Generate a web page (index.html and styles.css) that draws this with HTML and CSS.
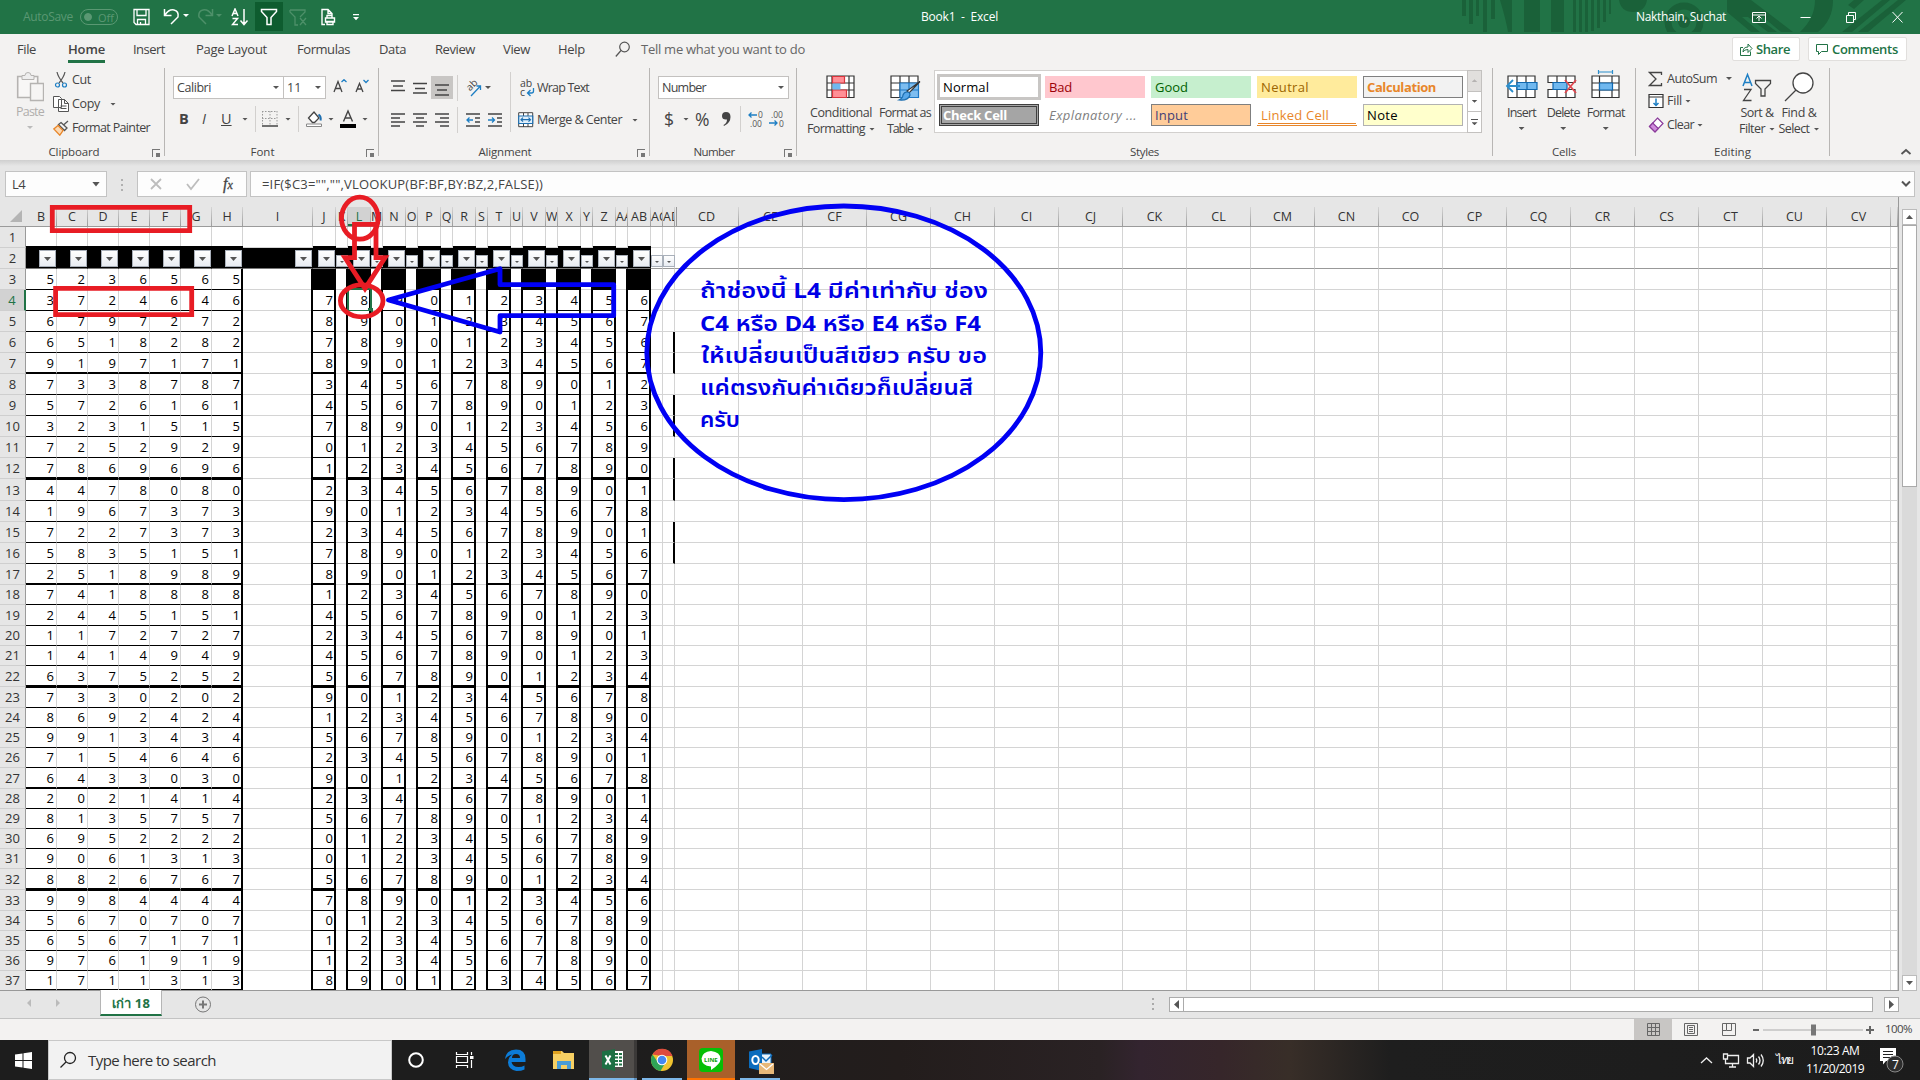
FILE: index.html
```html
<!DOCTYPE html>
<html lang="en">
<head>
<meta charset="utf-8">
<title>Book1 - Excel</title>
<link rel="stylesheet" href="styles.css">
</head>
<body>
<div class="screen">
<header class="titlebar">
  <svg class="titleart" width="500" height="32" viewBox="1420 0 500 32" fill="#1a6139">
    <path d="M1462 0h4v16h-4zM1469 0h4v24h-4zM1476 0h3v16h-3zM1483 0h4v32h-4zM1491 0h4v19h-4zM1500 0h12v32h-4q-2-12-8-32zM1524 0h16v32h-16zM1551 0h13v32h-13zM1573 0h3v32h-3zM1579 0h3v32h-3zM1585 0h3v32h-3zM1591 0h3v31h-3zM1597 0h3v28h-3zM1603 0h3v22h-3zM1609 0h2v14h-2zM1619 0h28q-2 12-14 12t-14-12z"/>
    <path d="M1727 0h24l42 32h-12l-18-15h-6l20 15h-9l-20-15h-6l18 15h-9l-24-20zM1815 0h18q0 20-15 32h-18q15-14 15-32zM1854 0h10l-10 9-6-4zM1842 32l40-32h8l-38 32zM1858 32l40-32h8l-38 32z"/>
    <circle cx="1684" cy="22" r="16" fill="none" stroke="#1a6139" stroke-width="7"/><circle cx="1684" cy="22" r="6"/>
  </svg>
  <div class="quick">
    <span class="faded" data-w="50">AutoSave</span>
    <svg width="40" height="18" fill="none" stroke="#5a9873"><rect x=".5" y="1.5" width="37" height="15" rx="7.5"/><circle cx="8" cy="9" r="3.5" fill="#5a9873"/><text x="18" y="13.5" font-size="11" fill="#5a9873" stroke="none">Off</text></svg>
    <svg width="18" height="18" fill="none" stroke="#fff" stroke-width="1.3"><path d="M1 1.500h15v15H3l-2-2zM4 1.500v6h9v-6M4.500 16.500v-5h8v5M7.500 16v-2"/></svg>
    <svg width="28" height="18" fill="none" stroke="#fff" stroke-width="1.5"><path d="M1.500 1v6.500h7M2 7q4-6 9-5t4 7l-7 7"/><path d="M20 6h6l-3 3z" fill="#fff" stroke="none"/></svg>
    <svg width="28" height="18" fill="none" stroke="#4d9069" stroke-width="1.500"><path d="M14.500 1v6.500h-7M14 7q-4-6-9-5t-4 7l7 7"/><path d="M18 6h6l-3 3z" fill="#4d9069" stroke="none"/></svg>
    <svg width="18" height="18" fill="none" stroke="#fff" stroke-width="1.500"><path d="M1 8l3-7 3 7M2 5.500h4M1.500 10.500h5l-5 6h5.500M13 1v15M9.500 12.500l3.500 4 3.500-4"/></svg>
    <span class="filteron"><svg width="18" height="18" fill="none" stroke="#fff" stroke-width="1.500"><path d="M1.500 1.500h15v2l-5.500 6v7h-4v-7l-5.500-6z"/></svg></span>
    <svg width="20" height="18" fill="none" stroke="#4d9069" stroke-width="1.300"><path d="M1 2h15v2l-5 5M1 2v2l5 5v8h3M11 10l6 7M17 10l-6 7"/></svg>
    <svg width="16" height="18" fill="none" stroke="#fff" stroke-width="1.400"><path d="M4 16.500H1v-15h6l4 4v3M7 1.500v4h4M6 9.500v-2h5v2M4.500 10h9v4h-9zM6 13.500h6v3H6z"/></svg>
    <svg width="8" height="18" fill="#fff"><path d="M0 6h6v1.200H0zM0 9h6l-3 3.200z"/></svg>
  </div>
  <span class="book" data-w="77">Book1&nbsp; -&nbsp; Excel</span>
  <span class="user" data-w="90">Nakthain, Suchat</span>
  <svg class="winicons" width="152" height="16" fill="none" stroke="#fff"><path d="M.500 3.500h13v10H.500zM.500 6h13M7 12V7.500M4.500 9.500L7 7l2.500 2.500M48.500 8.500h10M94.500 6.500h7v7h-7zM96.500 6v-2.500h7v7h-2.500M140.500 3l10 10.500M150.500 3l-10 10.500"/></svg>
</header>

<nav class="tabs">
  <span class="tab" data-w="19">File</span><span class="tab home" data-w="37">Home</span><span class="tab" data-w="32">Insert</span><span class="tab" data-w="71">Page Layout</span><span class="tab" data-w="53">Formulas</span><span class="tab" data-w="27">Data</span><span class="tab" data-w="40">Review</span><span class="tab" data-w="27">View</span><span class="tab" data-w="27">Help</span>
  <svg width="16" height="18" fill="none" stroke="#555" stroke-width="1.200"><circle cx="9.500" cy="6" r="4.800"/><path d="M6 9.500L.800 15.500"/></svg>
  <span class="tab tell" data-w="164">Tell me what you want to do</span>
  <span class="pill share"><svg width="13" height="14" fill="none" stroke="#217346"><path d="M3 5.500H.500v8h10v-4M3 10q0-5 5-5V2l4 4.500-4 4V7.500q-4 0-5 2.500z"/></svg><b data-w="34">Share</b></span>
  <span class="pill comments"><svg width="13" height="14" fill="none" stroke="#217346"><path d="M.500 2.500h11v7h-6l-3 3v-3h-2z"/></svg><b data-w="66">Comments</b></span>
</nav>

<section class="ribbon">
  <div class="group g-clip">
    <div class="body">
      <div class="big paste">
        <svg width="28" height="32" fill="none" stroke="#b5b3b1"><path d="M1.700 5.500h20v21h-20z" stroke-width="1.600" fill="#f8f7f6"/><path d="M6 8.500v-4h3q0-3 3-3t3 3h3v4z" fill="#eee"/><path d="M14.500 12.500h13v17h-13z" stroke-width="1.400" fill="#f6f5f4"/></svg>
        <span class="dim" data-w="28">Paste</span><i class="caret light"></i>
      </div>
      <div class="cliplist">
        <div><svg width="16" height="16" fill="none" stroke="#555" stroke-width="1.200"><path d="M4 0q1 5 6 11M12 0q-1 5-6 11"/><circle cx="4.500" cy="13" r="2" stroke="#1e7fc4"/><circle cx="11.500" cy="13" r="2" stroke="#1e7fc4"/></svg><span data-w="19">Cut</span></div>
        <div><svg width="16" height="16" fill="#fff" stroke="#555"><path d="M.500 .500h6l2 2v9h-8zM5.500 3.500h6l4 4v8h-10zM11.500 3.500v4h4M7.500 10h6M7.500 12.500h6"/></svg><span data-w="28">Copy</span><i class="caret gap"></i></div>
        <div><svg width="16" height="16" fill="none" stroke="#555" stroke-width="1.300"><path d="M15 1l-4.500 4M8 2.500l6 5.500-2.500 2.500-6-6z"/><path d="M5 5.500L.800 9l6 6.200 3.200-4.700z" stroke="#e8862a" fill="#fbd9b4"/></svg><span data-w="78">Format Painter</span></div>
      </div>
    </div>
    <div class="label"><span data-w="51">Clipboard</span><i class="launch"></i></div>
  </div>

  <div class="group g-font">
    <div class="r1 fontrow1"><span class="combo"><span data-w="34">Calibri</span><i class="caret"></i></span><span class="combo size"><span>11</span><i class="caret"></i></span>
      <svg width="15" height="18" fill="none" stroke="#444" stroke-width="1.300"><path d="M1 13L5 2.500 9 13M2.500 9.500h5"/><path d="M8.500 3L11 .700 13.500 3" stroke="#1e7fc4"/></svg>
      <svg width="15" height="18" fill="none" stroke="#444" stroke-width="1.300"><path d="M1 13L4.500 4.500 8 13M2.500 10h4"/><path d="M8.500 1l2.500 2.500L13.500 1" stroke="#1e7fc4"/></svg></div>
    <div class="r2 fontrow2"><b>B</b><em>I</em><u>U</u><i class="caret"></i><i class="vr"></i>
      <svg width="16" height="16" fill="none" stroke="#999" stroke-dasharray="1.500 1.500"><path d="M.500 0v14M15 0v14M0 .500h15M8 0v14M0 7.500h15"/><path d="M0 15h16" stroke="#444" stroke-width="1.500" stroke-dasharray="none"/></svg><i class="caret"></i><i class="vr"></i>
      <svg width="17" height="18" fill="none" stroke="#444" stroke-width="1.300"><path d="M2.500 8l5.500-6 5 6-4.500 4.500h-2z" fill="#fff"/><path d="M12.500 4.500q3 2 2 6" stroke="#1e6fb0" stroke-width="2"/><path d="M.500 14h15v2.500H.500z" fill="#fff" stroke="#888" stroke-width="1"/></svg><i class="caret"></i>
      <svg width="16" height="20" fill="none" stroke="#444" stroke-width="1.400"><path d="M3.500 12.500L8 2l4.500 10.500M5 9h6"/><path d="M0 15h16v4H0z" fill="#000" stroke="none"/></svg><i class="caret"></i></div>
    <div class="label"><span data-w="24">Font</span><i class="launch"></i></div>
  </div>

  <div class="group g-align">
    <div class="r1 alignrow">
      <svg width="15" height="16" stroke="#444" stroke-width="1.300"><path d="M0 1h14M2 6h10M0 10.500h14"/></svg>
      <svg width="15" height="16" stroke="#444" stroke-width="1.300"><path d="M0 3.500h14M2 8.500h10M0 13h14"/></svg>
      <span class="pressed"><svg width="15" height="16" stroke="#444" stroke-width="1.300"><path d="M0 5h14M2 10h10M0 15h14"/></svg></span>
      <i class="vr"></i>
      <svg width="17" height="18" fill="none"><text x="0" y="0" font-size="10" fill="#444" transform="translate(5 12.500) rotate(-45)">ab</text><path d="M6 17L15 7.500M11.500 7h4v4" stroke="#1e7fc4" stroke-width="1.300"/></svg>
      <i class="caret"></i><i class="vr tall"></i>
      <svg width="16" height="22" fill="none"><text x="0" y="10" font-size="10.500" fill="#444">ab</text><text x="0" y="19" font-size="10.500" fill="#444">c</text><path d="M13.500 11v3q0 2-2 2H8M10.500 13l-3 3 3 3" stroke="#1e7fc4" stroke-width="1.300"/></svg>
      <span data-w="52">Wrap Text</span></div>
    <div class="r2 alignrow two">
      <svg width="15" height="16" stroke="#444" stroke-width="1.300"><path d="M0 2h14M0 6h9M0 10h14M0 14h9"/></svg>
      <svg width="15" height="16" stroke="#444" stroke-width="1.300"><path d="M0 2h14M3 6h8M0 10h14M3 14h8"/></svg>
      <svg width="15" height="16" stroke="#444" stroke-width="1.300"><path d="M0 2h14M5 6h9M0 10h14M5 14h9"/></svg>
      <i class="vr"></i>
      <svg width="15" height="16" fill="none" stroke="#444" stroke-width="1.300"><path d="M0 2h14M9 6h5M9 10h5M0 14h14"/><path d="M7 8H1M3.500 5.500L1 8l2.500 2.500" stroke="#1e7fc4"/></svg>
      <svg width="15" height="16" fill="none" stroke="#444" stroke-width="1.300"><path d="M0 2h14M9 6h5M9 10h5M0 14h14"/><path d="M0 8h6M4 5.500L6.500 8 4 10.500" stroke="#1e7fc4"/></svg>
      <svg width="16" height="16" fill="#fff" stroke="#444"><path d="M.700 .700h14v14h-14zM5.500 1v3M10 1v3M5.500 12v3M10 12v3"/><path d="M.700 4h14v7.500h-14zM3 7.700h9.500M5 5.700l-2 2 2 2M10.500 5.700l2 2-2 2" stroke="#1e6fb0" fill="#e2f0fb" stroke-width="1.200"/></svg>
      <span data-w="85">Merge &amp; Center</span><i class="caret"></i></div>
    <div class="label"><span data-w="53">Alignment</span><i class="launch"></i></div>
  </div>

  <div class="group g-num">
    <div class="r1"><span class="combo"><span data-w="44">Number</span><i class="caret"></i></span></div>
    <div class="r2 numrow"><span class="sym">$</span><i class="caret"></i><span class="sym">%</span><svg width="11" height="16" fill="#444"><path d="M1 5q0-4 4-4 4.500 0 4.500 5Q9.500 12 3 15l-.500-1q3.500-2 3.500-5.500Q1 9 1 5z"/></svg><i class="vr"></i>
      <svg width="16" height="18" fill="none"><text x="10" y="7.500">0</text><text x="2" y="16.500">.00</text><path d="M9 5H1M3.500 2.500L1 5l2.500 2.500" stroke="#1e7fc4" stroke-width="1.300"/></svg>
      <svg width="17" height="18" fill="none"><text x="2" y="7.500">.00</text><text x="10" y="16.500">0</text><path d="M0 13h8M5.500 10.500L8 13l-2.500 2.500" stroke="#1e7fc4" stroke-width="1.300"/></svg></div>
    <div class="label"><span data-w="41">Number</span><i class="launch"></i></div>
  </div>

  <div class="group g-style">
    <div class="stylebody">
      <div class="big cf"><svg width="30" height="24" fill="#fff" stroke="#333" stroke-width="1.200"><path d="M1 1h27v21.500H1zM1 8h27M1 15h27M23 1v21.500M6 1v21.500"/><path d="M6.500 1.500h12v6.500h-12zM6.500 15h14v7.500h-14z" fill="#ff8f96" stroke="#d8343c"/><path d="M6.500 8.500h8v6h-8z" fill="#70b8ef" stroke="none"/></svg>
        <span data-w="62">Conditional</span><span class="ln"><span data-w="58">Formatting</span><i class="caret"></i></span></div>
      <div class="big fat"><svg width="31" height="27" fill="#fff" stroke="#333" stroke-width="1.200"><path d="M1 1h27v21.500H1zM1 8h27M1 15h27M19 1v21.500M10 1v21.500"/><path d="M10 8h18.500v14.500H10z" fill="#7dbdf0" stroke="#1e78c4"/><path d="M19 8v14M10 15h18" stroke="#1e78c4"/><path d="M30 6.500L19 18l-2-2z" fill="#fff"/><path d="M17 17q3 0 3 3-2 6-11 5 4-2 4-5 1-3 4-3z" fill="#58a8ea" stroke="#1e6fb0"/></svg>
        <span data-w="52">Format as</span><span class="ln"><span data-w="26">Table</span><i class="caret"></i></span></div>
      <div class="gallery">
        <div class="st normal"><span data-w="46">Normal</span></div><div class="st bad"><span data-w="23">Bad</span></div><div class="st good"><span data-w="33">Good</span></div><div class="st neutral"><span data-w="48">Neutral</span></div><div class="st calc"><span data-w="69">Calculation</span></div>
        <div class="st check"><span data-w="64">Check Cell</span></div><div class="st expl"><span data-w="88">Explanatory ...</span></div><div class="st input"><span data-w="33">Input</span></div><div class="st linked"><span data-w="68">Linked Cell</span></div><div class="st note"><span data-w="31">Note</span></div>
      </div>
      <div class="gscroll"><div class="off"><i class="caret up"></i></div><div><i class="caret"></i></div><div class="more"><i class="caret"></i></div></div>
    </div>
    <div class="label"><span data-w="29">Styles</span></div>
  </div>

  <div class="group g-cells">
    <div class="cellsbody">
      <div class="big"><svg width="34" height="30" fill="#fff" stroke="#333" stroke-width="1.200"><path d="M3 7h27v21.500H3zM12 7v21.500M21 7v21.500"/><path d="M12 13.500h20v7H12z" fill="#70b8ef" stroke="#1068b0"/><path d="M22 14v6" stroke="#1068b0"/><path d="M15 17H2M8 11l-6 6 6 6" fill="none" stroke="#2b8dcb" stroke-width="1.800"/></svg><span data-w="29">Insert</span><i class="caret"></i></div>
      <div class="big"><svg width="34" height="30" fill="#fff" stroke="#333" stroke-width="1.200"><path d="M2 7h27v6.500H2zM2 20.500h27v8H2zM11 7v6M20 7v6M11 21v7M20 21v7"/><path d="M7 13.500h14v7H7z" fill="#70b8ef" stroke="#1068b0"/><path d="M19 11l11 13M30 11L19 24" stroke="#e04850" stroke-width="1.800"/></svg><span data-w="33">Delete</span><i class="caret"></i></div>
      <div class="big"><svg width="34" height="30" fill="#fff" stroke="#333" stroke-width="1.200"><path d="M3 7h27v21.500H3zM10.500 7v21.500M23 7v21.500M3 14h27M3 21h27"/><path d="M10.500 14h13v7h-13z" fill="#70b8ef" stroke="#1068b0"/><path d="M9.500 3h14M9.500 1v4M23.500 1v4" stroke="#2b8dcb"/></svg><span data-w="38">Format</span><i class="caret"></i></div>
    </div>
    <div class="label"><span data-w="24">Cells</span></div>
  </div>

  <div class="group g-edit">
    <div class="editbody">
      <div class="editlist">
        <div><svg width="16" height="16" fill="none" stroke="#444" stroke-width="1.300"><path d="M13.500 4V1.500H1.500L8 8l-6.500 6.500h12V12"/></svg><span data-w="50">AutoSum</span><i class="caret far"></i></div>
        <div><svg width="16" height="16" fill="#fff" stroke="#333" stroke-width="1.200"><path d="M1 1.500h14v13H1zM1 4h14"/><path d="M8 5.500v7M5.500 10L8 12.500l2.500-2.500" stroke="#1e7fc4" stroke-width="1.500" fill="none"/></svg><span data-w="15">Fill</span><i class="caret"></i></div>
        <div><svg width="16" height="16" fill="#fff" stroke="#8a3a9a" stroke-width="1.200"><path d="M9.500 1L15 6.500 7 15 1.500 9.500z"/><path d="M4.800 6L1.500 9.500 7 15l3.300-3.500z" fill="#cf8bdc"/></svg><span data-w="27">Clear</span><i class="caret"></i></div>
      </div>
      <div class="big"><svg width="30" height="30" fill="none" stroke="#444" stroke-width="1.300"><path d="M1 14L5.500 2.500 10 14M2.500 10.500h6" stroke="#1e7fc4" stroke-width="1.500"/><path d="M2 17.500h7L1.500 28.500h8M13.500 8.500h15v3l-5.500 5.500v7h-4v-7l-5.500-5.500z"/></svg><span data-w="33">Sort &amp;</span><span class="ln"><span data-w="26">Filter</span><i class="caret"></i></span></div>
      <div class="big find"><svg width="32" height="30" fill="none" stroke="#444" stroke-width="1.300"><circle cx="20" cy="11" r="10" fill="#fff"/><path d="M13 18L2 29"/></svg><span data-w="35">Find &amp;</span><span class="ln"><span data-w="31">Select</span><i class="caret"></i></span></div>
    </div>
    <div class="label"><span data-w="37">Editing</span></div>
  </div>
  <svg class="collapse" width="12" height="8" fill="none" stroke="#555" stroke-width="1.800"><path d="M1.500 6L6 2l4.500 4"/></svg>
</section>

<section class="formula">
  <div class="namebox"><span data-w="13">L4</span><i class="caret"></i></div>
  <svg width="4" height="14" fill="#b0b0b0"><path d="M0 1h2v2H0zM0 6h2v2H0zM0 11h2v2H0z"/></svg>
  <div class="fxbox"><svg width="108" height="24" fill="none" stroke="#bdbdbd" stroke-width="1.800"><path d="M13 7l10 10M23 7L13 17M49 12l4 5 8-10"/><text x="85" y="17" font-family="Liberation Serif, serif" font-style="italic" font-size="16" fill="#444" stroke="#444" stroke-width=".3">f<tspan font-size="12">x</tspan></text></svg></div>
  <div class="expr"><span data-w="281">=IF($C3="","",VLOOKUP(BF:BF,BY:BZ,2,FALSE))</span><svg width="10" height="8" fill="none" stroke="#555" stroke-width="2"><path d="M1 1.500l4 4 4-4"/></svg></div>
</section>

<main class="work">
  <div class="sheet" id="sheet"></div>
  <div class="vscroll"><div class="btn"><i class="caret up"></i></div><div class="thumb"></div><div class="btn"><i class="caret"></i></div></div>
</main>

<footer class="sheetbar">
  <svg width="50" height="12" fill="#bbb"><path d="M5 1v8L1 5zM30 1v8l4-4z"/></svg>
  <span class="sheettab"><b data-w="38">เก่า 18</b></span>
  <svg class="add" width="18" height="18" fill="none" stroke="#777"><circle cx="9" cy="9.500" r="7.500"/><path d="M9 5.500v8M5 9.500h8" stroke-width="2"/></svg>
  <svg class="dots" width="4" height="14" fill="#aaa"><path d="M1 1h2v2H1zM1 6h2v2H1zM1 11h2v2H1z"/></svg>
  <div class="hscroll"><div class="hb"><svg width="5" height="9" fill="#555"><path d="M5 0v9L0 4.500z"/></svg></div><div class="hthumb"></div><div class="hb end"><svg width="5" height="9" fill="#555"><path d="M0 0v9l5-4.500z"/></svg></div></div>
</footer>
<footer class="status">
  <span class="view on"><svg width="13" height="13" fill="none" stroke="#666"><path d="M.500 .500h12v12H.500zM4.500 0v13M8.500 0v13M0 4.500h13M0 8.500h13"/></svg></span>
  <span class="view"><svg width="14" height="13" fill="none" stroke="#666"><path d="M.500 .500h13v12H.500zM3.500 2.500h7v8h-7zM5 4.500h4M5 6.500h4M5 8.500h4"/></svg></span>
  <span class="view"><svg width="14" height="13" fill="none" stroke="#666"><path d="M.500 .500h13v12H.500zM4.500 0v7.500h5V0M.500 7.500h4"/></svg></span>
  <svg width="124" height="14"><path d="M3 6h6v2H3zM116 6h8v2h-8zM119 3h2v8h-2z" fill="#666"/><path d="M13 7h100" stroke="#aaa"/><path d="M61 1.500h5v11h-5z" fill="#777"/></svg>
  <span class="pct" data-w="27">100%</span>
</footer>

<footer class="taskbar">
  <svg class="win" width="17" height="17" fill="#fff"><path d="M0 2.500l7.500-1V8H0zM8.500 1.300L17 0v8H8.500zM0 9h7.500v6.500l-7.500-1zM8.500 9H17v8l-8.500-1.300z"/></svg>
  <div class="search"><svg width="18" height="18" fill="none" stroke="#222" stroke-width="1.300"><circle cx="11" cy="7" r="5.500"/><path d="M7 11L1.500 16.500"/></svg><span data-w="128">Type here to search</span></div>
  <div class="apps">
    <svg width="48" height="40"><circle cx="24" cy="20" r="6.800" fill="none" stroke="#fff" stroke-width="2"/></svg>
    <svg width="51" height="40" fill="none" stroke="#fff" stroke-width="1.200"><path d="M16.500 12v2.500h11V12M16.500 28v-2.500h11V28M16.500 16.500h11v6h-11zM31.500 12v3M31.500 20v8"/><path d="M30 16h3.500v3H30z" fill="#fff" stroke="none"/></svg>
    <svg width="49" height="40"><path d="M14 19q1-9 11-9.500 9.500 0 9.500 9.500v3H20.500q1 5 7 5 3.500 0 6-1.500v4q-3 1.500-8 1.500-8-1-8.500-8.500 0-5 4-8-4 1-7 4.500zm7-1h8q0-4-4-4t-4 4z" fill="#0c7cd8"/></svg>
    <svg width="49" height="40"><path d="M13 11h9l2 2h10v16H13z" fill="#f7d063"/><path d="M13 11h8v3h-8z" fill="#e0a21f"/><path d="M17 29v-8h14v8h-4v-4h-6v4z" fill="#4a9dd6"/></svg>
    <svg width="49" height="40"><path d="M0 0h45v40H0z" fill="#514e4b"/><path d="M45 0h3v40h-3z" fill="#3b3938"/><path d="M0 38h45v2H0z" fill="#7db7e8"/><path d="M45 38h3v2h-3z" fill="#5f8fba"/><path d="M25 11h9v16h-9z" fill="#fff"/><path d="M26 13h3v2h-3zM30 13h3v2h-3zM26 16.500h3v2h-3zM30 16.500h3v2h-3zM26 20h3v2h-3zM30 20h3v2h-3zM26 23.500h3v2h-3zM30 23.500h3v2h-3z" fill="#217346"/><path d="M13 11.500L26 9v22l-13-3z" fill="#1d7044"/><path d="M16.500 15.500l5 9M21.500 15.500l-5 9" stroke="#fff" stroke-width="2"/></svg>
    <svg width="49" height="40"><path d="M4 38h40v2H4z" fill="#7db7e8"/><circle cx="24" cy="20" r="11" fill="#f0c330"/><path d="M14.500 14.500A11 11 0 0 1 34.500 16H24z" fill="#dd4b3e"/><path d="M14.500 14.500A11 11 0 0 0 22.500 31l5-8.500-8-1z" fill="#2fa457"/><circle cx="24" cy="20" r="5.300" fill="#fff"/><circle cx="24" cy="20" r="4.300" fill="#4688f1"/></svg>
    <svg width="49" height="40"><path d="M0 0h48v40H0z" fill="#a9602a"/><path d="M0 38h48v2H0z" fill="#ff7300"/><rect x="12" y="8" width="24" height="24" rx="4" fill="#06bf06"/><path d="M24 11q9.500 1 9.500 8 0 5-9.500 11v-3.500q-9.500-1-9.500-8 1-7 9.500-7.500z" fill="#fff"/><text x="17" y="21.500" font-size="6" font-weight="bold" fill="#06a006">LINE</text></svg>
    <svg width="48" height="40"><path d="M4 38h40v2H4z" fill="#7db7e8"/><path d="M25 14h10v10H25z" fill="#eaf3fb" stroke="#0d6cbd"/><path d="M26 17l4 4 6-6" fill="none" stroke="#0d6cbd" stroke-width="1.500"/><path d="M13 11.500L26 9v22l-13-3z" fill="#0b6cbd"/><ellipse cx="19.500" cy="20" rx="3.200" ry="4" fill="none" stroke="#fff" stroke-width="2"/><path d="M23 23h15v11H23z" fill="#e8b878"/><path d="M24 24l6.500 5.500L37 24" fill="none" stroke="#fff" stroke-width="1.300"/></svg>
  </div>
  <div class="tray">
    <svg width="66" height="20" fill="none" stroke="#eee" stroke-width="1.300"><path d="M1 13l5.500-5 5.500 5M27.500 5.500h11v8h-13v-4M32.500 14v3M29 17h7M23.500 4h4v5h-4z"/><path d="M47.500 8h2.500l3.500-3.500v12L50 13h-2.500zM56 8.500q1.500 2 0 4M58.500 6.500q3 4 0 8M61 4.500q4.500 6 0 12"/></svg>
    <span class="lang" data-w="17">ไทย</span>
    <div class="clock"><span data-w="49">10:23 AM</span><span data-w="58">11/20/2019</span></div>
    <svg width="25" height="26"><path d="M1 1h16v13H7l-3 3.500V14H1z" fill="#fff"/><path d="M4 4.500h10M4 7.500h10M4 10.500h7" stroke="#222"/><circle cx="16" cy="17" r="8" fill="#2d2d2d" stroke="#888"/><text x="13" y="21.500" font-size="12" fill="#fff">7</text></svg>
  </div>
</footer>

<svg class="notes" width="1920" height="1080" fill="none" stroke-width="4.800">
  <g stroke="#e81c24">
    <path d="M52.300 207.300h137.400v23.400H52.300zM55.600 288.300h136.100v26.400H55.600z"/>
    <ellipse cx="359.800" cy="218.200" rx="18.300" ry="21"/>
    <path d="M354.500 224.300h21.500v33.400h9L365 288.500l-20-30.800h9.500z"/>
    <ellipse cx="361.700" cy="300.800" rx="21.300" ry="16"/>
  </g>
  <g stroke="#0000f4">
    <path d="M388.500 300L500 268.700v16h113.700v31H500V332z" stroke-linejoin="round"/>
    <ellipse cx="843.800" cy="352.800" rx="197" ry="146.800"/>
  </g>
  <g class="thai">
    <text x="700" y="298" textLength="288" lengthAdjust="spacingAndGlyphs">ถ้าช่องนี้ <tspan>L4</tspan> มีค่าเท่ากับ ช่อง</text>
    <text x="700" y="330.500" textLength="281" lengthAdjust="spacingAndGlyphs"><tspan>C4</tspan> หรือ <tspan>D4</tspan> หรือ <tspan>E4</tspan> หรือ <tspan>F4</tspan></text>
    <text x="701" y="362.500" textLength="286" lengthAdjust="spacingAndGlyphs">ให้เปลี่ยนเป็นสีเขียว ครับ ขอ</text>
    <text x="700" y="394.500" textLength="273" lengthAdjust="spacingAndGlyphs">แค่ตรงกันค่าเดียวก็เปลี่ยนสี</text>
    <text x="700" y="426.500" textLength="40" lengthAdjust="spacingAndGlyphs">ครับ</text>
  </g>
</svg>
</div>
<script src="script.js"></script>
</body>
</html>
```
FILE: script.js
```js
// Worksheet contents: columns B-H for rows 3-37, and the J digit that starts each J-AB series for rows 4-37.
const left = ['5236565','3724646','6797272','6518282','9197171','7338787','5726161','3231515','7252929','7869696','4478080','1967373','7227373','5835151','2518989','7418888','2445151','1172727','1414949','6375252','7330202','8692424','9913434','7154646','6433030','2021414','8135757','6952222','9061313','8826767','9984444','5670707','6567171','9761919','1711313'];
const first = [7,8,7,8,3,4,7,0,1,2,9,2,7,8,1,4,2,4,5,9,1,5,2,9,2,5,0,0,5,7,0,1,1,8];

const names = ['B','C','D','E','F','G','H','I','J','K','L','M','N','O','P','Q','R','S','T','U','V','W','X','Y','Z','AA','AB','AC','AD'];
const edges = [26,57,88,119,150,181,212,243,313,336,348,371,383,406,418,441,453,476,488,511,523,546,558,581,593,616,628,651,663,675];
for (let i = 0; i < 19; i++) {
  names.push('C' + String.fromCharCode(68 + i));
  edges.push(739 + i * 64);
}
names.push('');
edges.push(1898);
const tops = [227,248,269,290,311,332,353,374,395,416,437,458,479,501,522,543,564,585,605,626,646,666,687,708,728,748,768,789,809,829,849,869,890,911,931,951,971,991];
const marked = [6,7,9,10,12,13,15,16];

const sheet = document.getElementById('sheet');
const make = (cls, parent, text) => {
  const e = document.createElement('div');
  e.className = cls;
  if (text !== undefined) e.textContent = text;
  parent.appendChild(e);
  return e;
};

const head = make('heads', sheet);
make('corner', head);
names.forEach((n, i) => {
  const c = make('head' + (n === 'L' ? ' sel' : '') + (n === 'CD' ? ' split' : ''), head);
  c.style.width = (edges[i + 1] - edges[i]) + 'px';
  const s = document.createElement('span');
  s.textContent = n;
  c.appendChild(s);
});

for (let r = 1; r <= 37; r++) {
  const row = make('row', sheet);
  row.style.height = (tops[r] - tops[r - 1]) + 'px';
  make('num' + (r === 4 ? ' sel' : ''), row, r);
  names.forEach((n, i) => {
    let cls = 'cell', text = '';
    const inLeft = i < 7;
    const inSeries = i >= 8 && i <= 26 && i % 2 === 0;
    if (inLeft && r >= 3) { cls += ' data'; text = left[r - 3][i]; if (i === 6) cls += ' rthick'; }
    if (inSeries && r >= 4) { cls += ' data rthick lthick'; text = (first[r - 4] + (i - 8) / 2) % 10; }
    if ((inLeft || inSeries) && r >= 4) {
      if (r % 5 === 2) cls += ' bottom2';
      if (r > 12 && r % 10 === 3) cls += ' top1';
    }
    if (r === 2 && i <= 26) cls += inSeries || inLeft ? ' black rise' : ' black';
    if (inSeries && r === 3) cls += ' black';
    if (r === 2 && i > 26) cls += ' freeze';
    if (n === 'AD' && marked.includes(r)) cls += ' mark';
    const c = make(cls, row, text);
    c.style.width = (edges[i + 1] - edges[i]) + 'px';
    if (r === 2 && i <= 28) make(i > 8 && !inSeries ? 'drop small' : 'drop', c);
    if (r === 4 && n === 'L') make('cursor', c);
  });
}

// Set tracking so that each label takes the width given in data-w.
document.querySelectorAll('[data-w]').forEach(e => {
  e.style.letterSpacing = '0';
  const range = document.createRange();
  range.selectNodeContents(e);
  const w = range.getBoundingClientRect().width;
  e.style.letterSpacing = ((+e.dataset.w - w) / e.textContent.length).toFixed(3) + 'px';
});
```
FILE: styles.css
```css
* { box-sizing: border-box; }
body { margin: 0; background: #e6e6e6; overflow: hidden; font: 12.5px/16px "Open Sans", "Noto Sans", sans-serif; color: #444; }
svg { display: block; flex: none; }
span, b { white-space: nowrap; }
.screen { position: relative; width: 1920px; height: 1080px; display: flex; flex-direction: column; overflow: hidden; }
.caret { display: block; flex: none; width: 6px; height: 3px; background: #555; clip-path: polygon(0 0, 100% 0, 50% 100%); }
.caret.light { background: #bbb; }
.caret.up { clip-path: polygon(0 100%, 100% 100%, 50% 0); }

/* title bar */
.titlebar { position: relative; height: 34px; flex: none; background: #217346; color: #fff; display: flex; align-items: center; font-size: 12px; }
.titlebar > * { position: relative; }
.titlebar > .titleart { position: absolute; right: 0; top: 0; }
.quick { width: 921px; height: 34px; padding-left: 23px; display: grid; grid-template-columns: 57px 53px 30px 35px 33px 24px 34px 32px 32px 20px; align-items: center; }
.quick text { font-family: "Open Sans", sans-serif; }
.faded { color: #5a9873; }
.filteron { width: 28px; height: 29px; background: #0e5c2f; display: flex; justify-content: center; align-items: center; margin-top: -1px; }
.book { width: 715px; }
.user { width: 116px; }

/* tabs */
.tabs { height: 32px; flex: none; background: #f3f2f1; display: flex; align-items: center; padding-left: 17px; font-size: 13px; }
.tab { flex: none; margin-right: 29px; height: 26px; line-height: 24px; width: 37px; }
.tab:nth-child(1) { width: 22px; }
.tab:nth-child(2) { width: 37px; }
.tab:nth-child(3) { width: 32px; margin-right: 31px; }
.tab:nth-child(4) { width: 71px; margin-right: 30px; }
.tab:nth-child(5) { width: 53px; }
.tab:nth-child(6) { width: 27px; }
.tab:nth-child(7) { width: 40px; margin-right: 28px; }
.tab:nth-child(8) { width: 27px; margin-right: 28px; }
.tab:nth-child(9) { width: 27px; margin-right: 30px; }
.tab.home { font-weight: 600; border-bottom: 3px solid #217346; margin-right: 28px; }
.tab.tell { margin: 0 0 0 10px; width: 1091px; color: #666; }
.pill { flex: none; height: 24px; background: #fff; border: 1px solid #e1dfdd; border-radius: 2px; color: #217346; display: flex; align-items: center; gap: 3px; padding-left: 7px; margin-top: -2px; }
.pill b { font-weight: 600; }
.share { width: 68px; margin-right: 8px; }
.comments { width: 99px; }

/* ribbon */
.ribbon { height: 94px; flex: none; background: #f3f2f1; display: flex; font-size: 12.5px; padding-top: 2px; }
.group { flex: none; height: 88px; border-right: 1px solid #b8b6b4; display: flex; flex-direction: column; }
.g-clip { width: 165px; } .g-font { width: 214px; } .g-align { width: 271px; } .g-num { width: 147px; }
.g-style { width: 696px; } .g-cells { width: 143px; } .g-edit { width: 194px; }
.label { margin-top: auto; height: 16px; margin-bottom: -4px; position: relative; display: flex; justify-content: center; font-size: 11.5px; }
.g-clip .label { padding-right: 16px; }
.g-font .label, .g-align .label, .g-num .label { padding-right: 18px; }
.launch { position: absolute; right: 4px; top: 5px; width: 8px; height: 8px; border: solid #777; border-width: 1px 0 0 1px; background: conic-gradient(#777 0 0) 100% 100% / 4px 4px no-repeat; }
.big { display: flex; flex-direction: column; align-items: center; }
.ln { display: flex; align-items: center; gap: 4px; }
.body { display: flex; padding-left: 15px; height: 74px; }
.paste { width: 30px; padding-top: 3px; }
.paste .dim { color: #b0aeac; margin-top: 1px; }
.paste .caret { margin-top: 6px; }
.cliplist { padding-left: 8px; }
.cliplist div { display: flex; align-items: center; height: 24px; gap: 3px; }
.gap { margin-left: 7px; }
.r1 { height: 35px; padding-top: 4px; align-items: center; }
.r2 { height: 34px; align-items: center; }
.combo { display: flex; width: 111px; height: 23px; background: #fff; border: 1px solid #c3c1bf; align-items: center; justify-content: space-between; padding: 0 4px 0 3px; }
.combo.size { width: 43px; }
.fontrow1 { display: grid; grid-template-columns: 110px 50px 22px 20px; padding-left: 8px; }
.fontrow2 { display: grid; grid-template-columns: 23px 19px 21px 13px 7px 23px 13px 8px 22px 12px 22px 10px; padding-left: 14px; font-size: 14.5px; padding-bottom: 2px; }
.vr { display: block; width: 1px; height: 26px; background: #d2d0ce; }
.vr.tall { height: 60px; align-self: start; margin-bottom: -40px; }
.alignrow { display: grid; grid-template-columns: 22px 18px 26px 8px 20px 25px 10px 17px 60px; grid-template-rows: 31px; padding-left: 12px; }
.alignrow.two { grid-template-columns: 22px 22px 22px 9px 22px 30px 19px 95px 10px; grid-template-rows: 34px; padding-bottom: 2px; }
.pressed { width: 22px; height: 23px; background: #c8c6c4; display: flex; align-items: center; justify-content: center; }
.g-align .r1 svg { overflow: visible; }
.g-align .r1 svg text { font-family: "Open Sans", sans-serif; }
.g-num .r1 { padding-left: 8px; display: flex; }
.g-num .combo { width: 131px; }
.numrow { display: grid; grid-template-columns: 19px 12px 26px 19px 8px 21px 20px; padding: 0 0 2px 14px; }
.numrow text { font: 8.5px "Open Sans", sans-serif; fill: #555; }
.numrow svg { overflow: visible; }
.sym { font-size: 17.5px; }
.stylebody { display: flex; padding-left: 9px; height: 66px; }
.cf { width: 70px; padding-top: 7px; }
.fat { width: 58px; padding-top: 7px; }
.cf svg, .fat svg { height: 27px; margin-bottom: 3px; }
.gallery { width: 533px; height: 63px; margin-top: 2px; border: 1px solid #d2d0ce; border-right: 0; background: #fff; display: grid; grid-template-columns: repeat(5, 100px); gap: 6px; grid-template-rows: 22px 22px; padding: 5px 0 0 4px; }
.st { font-size: 13px; line-height: 20px; padding-left: 3px; height: 22px; color: #000; border: 1px solid transparent; }
.normal { outline: 3px solid #c8c6c4; outline-offset: -1px; background: #fff; }
.bad { background: #ffc7ce; color: #9c0006; }
.good { background: #c6efce; color: #006100; }
.neutral { background: #ffeb9c; color: #9c6500; }
.calc { background: #f2f2f2; color: #e8862a; font-weight: bold; border-color: #7f7f7f; }
.check { background: #a5a5a5; color: #fff; font-weight: bold; border: 3px double #3f3f3f; line-height: 16px; padding-left: 1px; }
.expl { color: #7f7f7f; font-style: italic; }
.input { background: #ffcc99; color: #3f3f76; border-color: #7f7f7f; }
.linked { color: #e8862a; border-bottom: 3px double #e8862a; }
.note { background: #ffffcc; border-color: #b2b2b2; }
.gscroll { width: 15px; height: 63px; margin-top: 2px; border: 1px solid #c3c1bf; background: #fff; }
.gscroll div { height: 20.500px; display: flex; align-items: center; justify-content: center; border-bottom: 1px solid #c3c1bf; }
.gscroll div:last-child { border: 0; flex-direction: column; gap: 2px; }
.gscroll .more::before { content: ""; width: 7px; height: 1px; background: #555; }
.gscroll .off { background: #e1dfdd; }
.gscroll .off .caret { background: #b5b3b1; }
.cellsbody { display: flex; padding-left: 8px; height: 66px; }
.cellsbody .big { width: 42.500px; padding-top: 1px; }
.cellsbody .big svg { margin: 0 0 6px; }
.cellsbody .big .caret { margin-top: 6px; }
.cellsbody .big:nth-child(1) { width: 41px; }
.editbody { display: flex; padding-left: 12px; height: 66px; }
.editlist { width: 91px; }
.editlist div { height: 24px; display: flex; align-items: center; gap: 3px; }
.editlist div:first-child { height: 21px; }
.far { margin-left: 6px; }
.editbody .big { width: 36px; padding-top: 4px; }
.editbody .big svg { margin-bottom: 3px; }
.editbody .find { margin-left: 5px; width: 38px; }
.collapse { margin: 80px 0 0 70px; }

/* formula bar */
.formula { height: 37px; flex: none; background: linear-gradient(#cfcfcf, #e6e6e6 6px); padding: 11px 5px 0; display: grid; grid-template-columns: 116px 16px 113px 1665px; }
.formula > svg { margin-top: 7px; }
.namebox, .fxbox, .expr { height: 26px; background: #fdfdfd; border: 1px solid #c3c3c3; display: flex; align-items: center; justify-content: space-between; }
.namebox { width: 102px; padding: 0 6px; font-size: 13px; }
.namebox .caret { width: 8px; height: 5px; }
.fxbox { width: 110px; }
.expr { padding: 0 3px 0 11px; font-size: 13px; }

/* worksheet */
.work { height: 794px; flex: none; display: flex; }
.sheet { width: 1899px; border-bottom: 1px solid #999; border-right: 1px solid #999; overflow: hidden; flex: none; }
.heads { height: 30px; display: flex; align-items: flex-end; border-bottom: 1px solid #9b9b9b; color: #333; }
.corner { width: 26px; flex: none; height: 19px; background: #b4b4b4; clip-path: polygon(22px 3px, 22px 15px, 10px 15px); }
.head { flex: none; height: 19px; font-size: 12.5px; line-height: 19px; border-right: 1px solid; border-image: linear-gradient(#d8d8d8, #999) 1; overflow: hidden; display: flex; justify-content: safe center; }
.head.sel { background: #d2d2d2; color: #217346; box-shadow: inset 0 -2px 0 #217346; }
.head.split { background: linear-gradient(#999, #999) 1px 0 / 1px 100% no-repeat; }
.row { display: flex; }
.num { width: 26px; flex: none; background: #e6e6e6; border-right: 1px solid #9b9b9b; border-bottom: 1px solid #cfcfcf; font-size: 13px; text-align: center; line-height: 16px; display: flex; flex-direction: column; justify-content: flex-end; padding-bottom: 2px; color: #333; }
.num.sel { background: #d2d2d2; color: #217346; border-right: 2px solid #217346; }
.cell { position: relative; flex: none; background: #fff; border-right: 1px solid #d4d4d4; border-bottom: 1px solid #d4d4d4; color: #000; font-size: 13px; line-height: 16px; text-align: right; display: flex; flex-direction: column; justify-content: flex-end; padding: 0 2px 2px 0; }
.data { border-bottom-color: #000; }
.rthick { border-right: 2px solid #000; padding-right: 1px; }
.lthick { box-shadow: -2px 0 0 #000; }
.lthick, .cell.black { z-index: 1; }
.bottom2 { border-bottom: 2px solid #000; padding-bottom: 1px; }
.top1 { border-top: 1px solid #000; }
.cell.black { background: #000; border-color: #000; border-bottom-color: #777; }
.row:nth-child(4) .black { box-shadow: -2px 0 0 #000; border-bottom-color: #000; }
.rise { box-shadow: 0 -2px 0 #000; }
.freeze { border-bottom-color: #999; }
.mark { border-right: 2px solid #000; }
.drop { position: absolute; right: 0; bottom: 1px; width: 17px; height: 17px; background: linear-gradient(#fff, #e8ecf2); border: 1px solid #a9b0ba; }
.drop::after { content: ""; position: absolute; left: 4px; top: 6px; width: 7px; height: 4px; background: #555; clip-path: polygon(0 0, 100% 0, 50% 100%); }
.drop.small { width: 12px; height: 12px; right: -1px; }
.drop.small::after { left: 3px; top: 5px; width: 4px; height: 2px; }
.cursor { position: absolute; left: -1px; top: -2px; width: 25px; height: 24px; border: 2px solid #217346; }
.cursor::after { content: ""; position: absolute; right: -3px; bottom: -3px; width: 5px; height: 5px; background: #217346; }
.vscroll { width: 15px; margin: 12px 0 0 3px; background: #dadada; display: flex; flex-direction: column; }
.vscroll .btn { height: 16px; background: #fff; border: 1px solid #bbb; display: flex; align-items: center; justify-content: center; }
.vscroll .btn:last-child { margin-top: auto; }
.vscroll .caret { width: 7px; height: 4px; }
.vscroll .thumb { height: 262px; background: #fff; border: 1px solid #aaa; }

/* sheet tabs and status bar */
.sheetbar { height: 28px; flex: none; background: #e6e6e6; border-bottom: 1px solid #c3c3c3; display: flex; align-items: center; padding-left: 26px; }
.sheettab { width: 62px; height: 26px; margin: -4px 32px 0 24px; background: #fff; border: solid #b5b5b5; border-width: 0 1px 2px; border-bottom-color: #217346; color: #217346; text-align: center; line-height: 26px; font-size: 13px; }
.sheetbar > svg { margin-top: -2px; }
.dots { margin-left: 939px; }
.hscroll { width: 730px; height: 15px; margin-left: 14px; display: flex; }
.hb { width: 15px; border: 1px solid #ababab; background: #fff; display: flex; align-items: center; justify-content: center; }
.hthumb { width: 690px; margin-left: -1px; border: 1px solid #ababab; background: #fff; }
.hb.end { margin-left: auto; }
.status { height: 21px; flex: none; background: #f3f2f1; display: flex; align-items: center; padding-left: 1634px; font-size: 11.5px; }
.view { width: 38px; height: 21px; display: flex; align-items: center; justify-content: center; }
.view.on { background: #c8c6c4; }
.status > svg { margin-left: 2px; }
.pct { margin-left: 11px; margin-top: -1px; }

/* taskbar */
.taskbar { height: 40px; flex: none; background: linear-gradient(90deg, #1d1d1d 0, #1d1d1d 600px, #231d1c 900px, #2a2224 1100px, #33242f 1140px, #36262a 1220px, #382e28 1290px, #1e1e1e 1390px, #1c1c1c); display: flex; align-items: center; color: #fff; }
.win { margin: 0 16px 0 15px; }
.search { width: 344px; height: 40px; background: #f2f2f2; border: 1px solid #c8c8c8; color: #333; font-size: 15px; display: flex; align-items: center; gap: 11px; padding-left: 10px; }
.apps { display: flex; width: 1312px; }
.tray { display: flex; align-items: center; font-size: 12px; }
.apps text, .tray text { font-family: "Open Sans", sans-serif; }
.tray > svg:first-child { margin-left: -4px; }
.lang { margin-left: 10px; width: 24px; }
.clock { width: 70px; display: flex; flex-direction: column; align-items: center; line-height: 18px; margin-right: 9px; }

/* drawn markings over the sheet */
.notes { position: absolute; left: 0; top: 0; z-index: 5; }
.thai { fill: #0000e6; font: 600 22px "Noto Sans Thai", "Noto Sans", "Open Sans", sans-serif; }
.thai tspan { font-weight: 700; font-size: 21px; }
```
